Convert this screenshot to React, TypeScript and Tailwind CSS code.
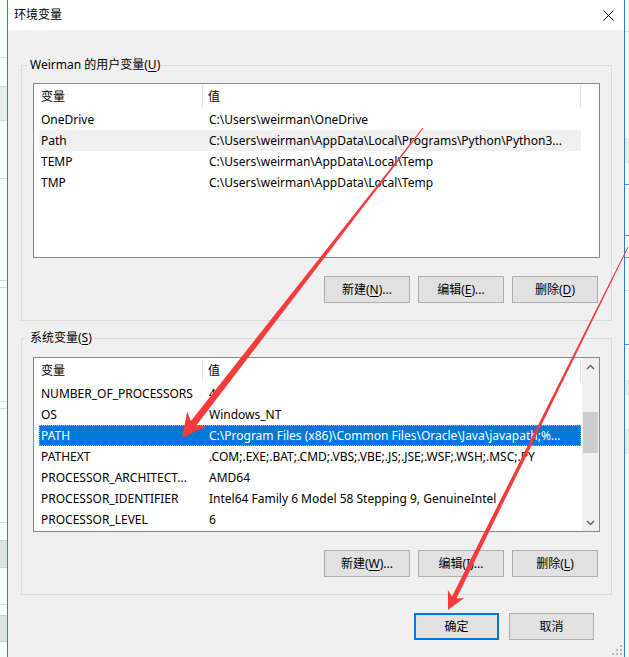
import React from "react";

const U = ({ c }: { c: string }) => (
  <span className="underline underline-offset-[2px] decoration-[1px]">{c}</span>
);

function Btn({
  children,
  w = "w-[86px]",
  primary = false,
}: {
  children: React.ReactNode;
  w?: string;
  primary?: boolean;
}) {
  return (
    <div
      className={`${w} h-[27px] flex items-center justify-center bg-[#e1e1e1] text-[12px] text-black ${
        primary ? "border-2 border-[#0078d7]" : "border border-[#adadad]"
      }`}
    >
      {children}
    </div>
  );
}

type Row = { name: string; value: string; state?: "hover" | "selected" };

function Chevron({ up }: { up?: boolean }) {
  return (
    <svg width="9" height="6" viewBox="0 0 9 6">
      <polyline
        points={up ? "1,5 4.5,1.5 8,5" : "1,1 4.5,4.5 8,1"}
        fill="none"
        stroke="#606060"
        strokeWidth="1.4"
      />
    </svg>
  );
}

function Scrollbar() {
  return (
    <div className="w-[17px] bg-[#f0f0f0] flex flex-col shrink-0">
      <div className="h-[17px] flex items-center justify-center">
        <Chevron up />
      </div>
      <div className="flex-1 px-[1px]">
        <div className="mt-[37px] h-[41px] bg-[#cdcdcd]" />
      </div>
      <div className="h-[17px] flex items-center justify-center">
        <Chevron />
      </div>
    </div>
  );
}

function ListView({ rows, scrollbar }: { rows: Row[]; scrollbar?: boolean }) {
  return (
    <div className="h-[175px] border border-[#828790] bg-white flex text-[12px] text-black">
      <div className="flex-1 flex flex-col pl-[5px] min-w-0">
        <div className="h-[25px] flex shrink-0">
          <div className="w-[163px] flex items-center pl-[2px]">变量</div>
          <div className="w-[1px] my-[1px] bg-[#e5e5e5]" />
          <div className="w-[377px] flex items-center pl-[5px]">值</div>
          <div className="w-[1px] my-[1px] bg-[#e5e5e5]" />
        </div>
        {rows.map((r) => (
          <div
            key={r.name}
            className={`h-[21px] w-[542px] flex items-center shrink-0 ${
              r.state === "hover"
                ? "bg-[#f0f0f0]"
                : r.state === "selected"
                ? "bg-[#0078d7] text-white outline-1 outline-dotted outline-[#e8a33d] -outline-offset-1"
                : ""
            }`}
          >
            <div className="w-[164px] pl-[2px] whitespace-nowrap overflow-hidden">{r.name}</div>
            <div className="w-[378px] pl-[6px] whitespace-nowrap overflow-hidden">{r.value}</div>
          </div>
        ))}
      </div>
      {scrollbar && <Scrollbar />}
    </div>
  );
}

const userRows: Row[] = [
  { name: "OneDrive", value: "C:\\Users\\weirman\\OneDrive" },
  {
    name: "Path",
    value: "C:\\Users\\weirman\\AppData\\Local\\Programs\\Python\\Python3...",
    state: "hover",
  },
  { name: "TEMP", value: "C:\\Users\\weirman\\AppData\\Local\\Temp" },
  { name: "TMP", value: "C:\\Users\\weirman\\AppData\\Local\\Temp" },
];

const sysRows: Row[] = [
  { name: "NUMBER_OF_PROCESSORS", value: "4" },
  { name: "OS", value: "Windows_NT" },
  {
    name: "PATH",
    value: "C:\\Program Files (x86)\\Common Files\\Oracle\\Java\\javapath;%...",
    state: "selected",
  },
  { name: "PATHEXT", value: ".COM;.EXE;.BAT;.CMD;.VBS;.VBE;.JS;.JSE;.WSF;.WSH;.MSC;.PY" },
  { name: "PROCESSOR_ARCHITECT...", value: "AMD64" },
  { name: "PROCESSOR_IDENTIFIER", value: "Intel64 Family 6 Model 58 Stepping 9, GenuineIntel" },
  { name: "PROCESSOR_LEVEL", value: "6" },
];

function LeftStrip() {
  const line = "h-[1px] bg-[#d9d9d9] shrink-0";
  return (
    <div className="w-[7px] flex flex-col bg-white shrink-0">
      <div className="h-[57px] shrink-0" />
      <div className={line} />
      <div className="h-[28px] shrink-0" />
      <div className="h-[35px] shrink-0 bg-[#ececec] border-y border-[#d9d9d9]" />
      <div className="h-[57px] shrink-0" />
      <div className={line} />
      <div className="h-[101px] shrink-0" />
      <div className={line} />
      <div className="h-[6px] shrink-0" />
      <div className={line} />
      <div className="h-[113px] shrink-0" />
      <div className={line} />
      <div className="h-[6px] shrink-0" />
      <div className={line} />
      <div className="h-[113px] shrink-0" />
      <div className={line} />
      <div className="h-[17px] shrink-0" />
      <div className="h-[28px] shrink-0 bg-[#e1e1e1] border-y border-[#cfcfcf]" />
      <div className="h-[36px] shrink-0" />
      <div className={line} />
      <div className="h-[10px] shrink-0" />
      <div className="h-[27px] shrink-0 bg-[#e1e1e1] border-y border-[#cfcfcf]" />
    </div>
  );
}

function RightStrip() {
  const line = "h-[1px] bg-[#d9d9d9] shrink-0";
  const blue = "h-[1px] bg-[#4a90d9] shrink-0";
  return (
    <div className="flex-1 flex flex-col bg-white">
      <div className="h-[31px] shrink-0" />
      <div className={line} />
      <div className="h-[106px] shrink-0" />
      <div className="h-[25px] shrink-0 bg-[#ececec]" />
      <div className="h-[21px] shrink-0" />
      <div className={blue} />
      <div className="h-[50px] shrink-0" />
      <div className={blue} />
      <div className="h-[21px] shrink-0" />
      <div className={blue} />
      <div className="h-[32px] shrink-0" />
      <div className={line} />
      <div className="h-[53px] shrink-0" />
      <div className={blue} />
      <div className="h-[35px] shrink-0" />
      <div className="h-[15px] shrink-0 bg-[#ececec]" />
      <div className="h-[34px] shrink-0" />
      <div className="h-[25px] shrink-0 bg-[#ececec]" />
    </div>
  );
}

export default function App() {
  return (
    <div className="relative w-[629px] h-[657px] overflow-hidden flex bg-white font-['Noto_Sans','Noto_Sans_CJK_SC',sans-serif] text-[12px] text-black">
      <LeftStrip />
      <div className="relative w-[618px] h-[657px] shrink-0 flex flex-col border-x border-[#2b7fd6] bg-[#f0f0f0]">
        <div className="h-[30px] shrink-0 bg-white flex items-center justify-between pl-[6px] pr-[10px]">
          <span className="text-[12px]">环境变量</span>
          <svg width="11" height="11" viewBox="0 0 11 11">
            <line x1="0.5" y1="0.5" x2="10.5" y2="10.5" stroke="#000" strokeWidth="1" />
            <line x1="10.5" y1="0.5" x2="0.5" y2="10.5" stroke="#000" strokeWidth="1" />
          </svg>
        </div>
        <div className="flex-1 flex flex-col pl-[13px] pr-[12px]">
          <fieldset className="mt-[26px] border border-[#dcdcdc] px-[11px] pt-[9px] pb-[17px]">
            <legend className="ml-[-5px] px-[2px] leading-[18px]">
              Weirman 的用户变量(<U c="U" />)
            </legend>
            <ListView rows={userRows} />
            <div className="mt-[18px] mr-[2px] flex justify-end gap-[8px]">
              <Btn>
                新建(<U c="N" />)...
              </Btn>
              <Btn>
                编辑(<U c="E" />)...
              </Btn>
              <Btn>
                删除(<U c="D" />)
              </Btn>
            </div>
          </fieldset>
          <fieldset className="mt-[8px] border border-[#dcdcdc] px-[11px] pt-[10px] pb-[17px]">
            <legend className="ml-[-5px] px-[2px] leading-[18px]">
              系统变量(<U c="S" />)
            </legend>
            <ListView rows={sysRows} scrollbar />
            <div className="mt-[18px] mr-[2px] flex justify-end gap-[8px]">
              <Btn>
                新建(<U c="W" />)...
              </Btn>
              <Btn>
                编辑(<U c="I" />)...
              </Btn>
              <Btn>
                删除(<U c="L" />)
              </Btn>
            </div>
          </fieldset>
          <div className="mt-[18px] mr-[18px] flex justify-end gap-[10px]">
            <Btn w="w-[85px]" primary>
              确定
            </Btn>
            <Btn w="w-[85px]">取消</Btn>
          </div>
        </div>
        <svg className="absolute right-[2px] bottom-[2px]" width="10" height="10" viewBox="0 0 10 10">
          {[
            [8, 0],
            [8, 4],
            [4, 4],
            [8, 8],
            [4, 8],
            [0, 8],
          ].map(([x, y], i) => (
            <rect key={i} x={x} y={y} width="2" height="2" fill="#b8b8b8" />
          ))}
        </svg>
      </div>
      <RightStrip />
      <svg
        className="absolute left-0 top-0 pointer-events-none"
        width="629"
        height="657"
        viewBox="0 0 629 657"
      >
        <polygon
          fill="#f53b3b"
          points="423.4,128.3 196.5,425.2 206.2,426.4 182,438 187.2,411.6 190.9,420.9 422.6,127.7"
        />
        <polygon
          fill="#f53b3b"
          points="628.4,247.2 456.4,598.6 464.1,597.9 448,610 447.9,589.9 452.0,596.4 627.6,246.8"
        />
      </svg>
    </div>
  );
}
